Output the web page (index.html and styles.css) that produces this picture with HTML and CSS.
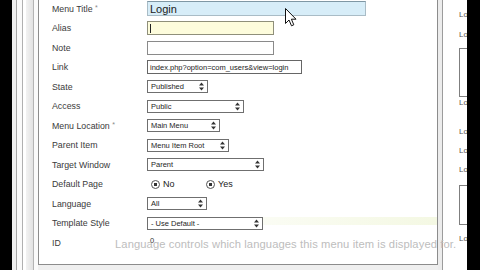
FILE: index.html
```html
<!DOCTYPE html>
<html>
<head>
<meta charset="utf-8">
<link rel="stylesheet" href="styles.css">
</head>
<body>
<div class="screen">
  <div class="edge"></div>
  <div class="chrome">
    <div class="c c1"></div>
    <div class="c c2"></div>
    <div class="c c3"></div>
    <div class="c c4"></div>
    <div class="c c5"></div>
  </div>
  <div class="main">
    <div class="panel">
      <div class="form">
        <div class="row"><span class="label">Menu Title <span class="star">*</span></span><span class="field title">Login</span></div>
        <div class="row"><span class="label">Alias</span><span class="field alias"><span class="caret"></span></span></div>
        <div class="row"><span class="label">Note</span><span class="field note"></span></div>
        <div class="row"><span class="label">Link</span><span class="field link">index.php?option=com_users&amp;view=login</span></div>
        <div class="row"><span class="label">State</span><span class="select w-state">Published<svg class="arr" viewBox="0 0 5 9"><path d="M0 3.5 L2.5 0.5 L5 3.5 Z M0 5.5 L2.5 8.5 L5 5.5 Z"/></svg></span></div>
        <div class="row"><span class="label">Access</span><span class="select w-access">Public<svg class="arr" viewBox="0 0 5 9"><path d="M0 3.5 L2.5 0.5 L5 3.5 Z M0 5.5 L2.5 8.5 L5 5.5 Z"/></svg></span></div>
        <div class="row"><span class="label">Menu Location <span class="star">*</span></span><span class="select w-loc">Main Menu<svg class="arr" viewBox="0 0 5 9"><path d="M0 3.5 L2.5 0.5 L5 3.5 Z M0 5.5 L2.5 8.5 L5 5.5 Z"/></svg></span></div>
        <div class="row"><span class="label">Parent Item</span><span class="select w-parent">Menu Item Root<svg class="arr" viewBox="0 0 5 9"><path d="M0 3.5 L2.5 0.5 L5 3.5 Z M0 5.5 L2.5 8.5 L5 5.5 Z"/></svg></span></div>
        <div class="row"><span class="label">Target Window</span><span class="select w-target">Parent<svg class="arr" viewBox="0 0 5 9"><path d="M0 3.5 L2.5 0.5 L5 3.5 Z M0 5.5 L2.5 8.5 L5 5.5 Z"/></svg></span></div>
        <div class="row"><span class="label">Default Page</span>
          <span class="radios">
            <span class="radio"><span class="dot"></span>No</span>
            <span class="radio"><span class="dot"></span>Yes</span>
          </span>
        </div>
        <div class="row"><span class="label">Language</span><span class="select w-lang">All<svg class="arr" viewBox="0 0 5 9"><path d="M0 3.5 L2.5 0.5 L5 3.5 Z M0 5.5 L2.5 8.5 L5 5.5 Z"/></svg></span></div>
        <div class="row glow"><span class="label">Template Style</span><span class="select w-tpl">- Use Default -<svg class="arr" viewBox="0 0 5 9"><path d="M0 3.5 L2.5 0.5 L5 3.5 Z M0 5.5 L2.5 8.5 L5 5.5 Z"/></svg></span></div>
        <div class="row"><span class="label">ID</span><span class="idval">0</span></div>
      </div>
      <svg class="cursor" viewBox="0 0 12 19"><path d="M0.5 0.5 L0.5 15.5 L4 12 L6.5 17.8 L8.8 16.8 L6.4 11.2 L11 11.2 Z" fill="#fff" stroke="#111" stroke-width="1" stroke-linejoin="round"/></svg>
    </div>
    <div class="foot"></div>
  </div>
  <div class="gutter"><div class="g1"></div><div class="g2"></div></div>
  <div class="side">
    <span class="lo m1">Location</span>
    <span class="lo m2">Location</span>
    <span class="box b1"></span>
    <span class="lo m3">Location</span>
    <span class="lo m4">Location</span>
    <span class="lo m5">Location</span>
    <span class="lo m5">Location</span>
    <span class="box b2"></span>
    <span class="lo m6">Location</span>
  </div>
  <div class="edge right"></div>
  <div class="tip">Language controls which languages this menu item is displayed for.</div>
</div>
</body>
</html>
```
FILE: styles.css
```css
* { box-sizing: border-box; }
html, body { margin: 0; padding: 0; }
body {
  width: 480px;
  height: 270px;
  overflow: hidden;
  background: #fff;
  font-family: "Liberation Sans", Arial, sans-serif;
}
.screen {
  position: relative;
  display: flex;
  width: 480px;
  height: 270px;
  overflow: hidden;
}
.edge { width: 12px; background: #000; flex: none; }
.edge.right { width: 13px; }

.chrome { width: 26px; display: flex; flex: none; }
.c { height: 100%; }
.c1 { width: 5px; background: #efefef; border-right: 1px solid #a6a6a6; }
.c2 { width: 6px; background: #fafafa; border-right: 1px solid #b0b0b0; }
.c3 { width: 3px; background: #fff; }
.c4 { width: 8px; background: linear-gradient(to right, #f2f2f2, #e2e2e2); border-right: 1px solid #b4b4b4; }
.c5 { width: 4px; background: #fafafa; }

.main { width: 400px; flex: none; display: flex; flex-direction: column; }
.panel {
  position: relative;
  height: 265px;
  background: #fff;
  border-left: 1px solid #8c8c8c;
  border-right: 1px solid #8c8c8c;
  border-bottom: 1px solid #8c8c8c;
}
.foot { flex: 1; background: #efefef; }

.form {
  margin-top: -1px;
  padding-left: 13px;
  display: flex;
  flex-direction: column;
  height: 264px;
  overflow: hidden;
}
.row {
  flex: none;
  height: 19.5px;
  display: flex;
  align-items: center;
}
.label {
  width: 95px;
  flex: none;
  font-size: 8.8px;
  color: #3a3a3a;
}
.star { color: #888; font-size: 7px; vertical-align: top; }

.field {
  display: flex;
  align-items: center;
  height: 14px;
  border: 1px solid #8a8a8a;
  background: #fff;
  font-size: 7.5px;
  color: #222;
  padding-left: 2px;
}
.title {
  width: 219px;
  height: 15px;
  background: #d7edf8;
  border-color: #a9bcc6;
  border-top-color: #7f97a4;
  font-size: 11px;
  color: #1a1a1a;
}
.alias { width: 127px; background: #fdfcdc; border-color: #8f8f7a; }
.caret { width: 1px; height: 9px; background: #222; }
.note { width: 127px; }
.link { width: 155px; height: 14px; border-color: #666; white-space: nowrap; overflow: hidden; }

.select {
  display: flex;
  align-items: center;
  justify-content: space-between;
  height: 13px;
  border: 1px solid #6f6f6f;
  background: #fff;
  font-size: 7.5px;
  color: #1e1e1e;
  padding: 0 3px 0 3px;
  white-space: nowrap;
}
.arr { width: 5px; height: 9px; fill: #333; }
.w-state { width: 61px; }
.w-access { width: 97px; }
.w-loc { width: 73px; }
.w-parent { width: 82px; }
.w-target { width: 117px; }
.w-lang { width: 60px; }
.w-tpl { width: 116px; }

.radios { display: flex; padding-left: 4px; }
.radio {
  display: flex;
  align-items: center;
  gap: 3px;
  width: 55px;
  font-size: 9px;
  color: #222;
}
.dot {
  width: 9px;
  height: 9px;
  border-radius: 50%;
  border: 1.5px solid #555;
  background: radial-gradient(circle, #333 0 1.6px, #fff 2px);
}

.glow {
  background: linear-gradient(to right, rgba(246, 249, 232, 0) 25%, #f4f8e3 100%) no-repeat;
  background-size: 100% 8px;
  background-position: 0 3px;
}
.idval { font-size: 7.5px; color: #333; padding-left: 3px; margin-top: -4px; }

.tip {
  position: absolute;
  left: 115px;
  top: 238px;
  font-size: 11.2px;
  letter-spacing: 0.1px;
  color: #bdbdbd;
  white-space: nowrap;
}
.cursor {
  position: absolute;
  left: 246px;
  top: 8px;
  width: 12px;
  height: 19px;
}

.gutter { width: 6px; display: flex; flex: none; }
.g1 { width: 5px; background: #ececec; border-right: 1px solid #9c9c9c; }
.g2 { width: 1px; background: #fff; }

.side {
  width: 23px;
  flex: none;
  padding-left: 15px;
  display: flex;
  flex-direction: column;
  overflow: hidden;
  background: #fff;
}
.lo {
  display: block;
  flex: none;
  height: 10px;
  font-size: 8px;
  line-height: 10px;
  color: #555;
  white-space: nowrap;
}
.box {
  display: block;
  flex: none;
  width: 20px;
  border: 1px solid #7f7f7f;
  border-right: none;
}
.m1 { margin-top: 10px; }
.m2 { margin-top: 10px; }
.b1 { margin-top: 8px; height: 49px; }
.m3 { margin-top: 1px; }
.m4 { margin-top: 19px; }
.m5 { margin-top: 9px; }
.b2 { margin-top: 10px; height: 40px; }
.m6 { margin-top: 9px; }
```
